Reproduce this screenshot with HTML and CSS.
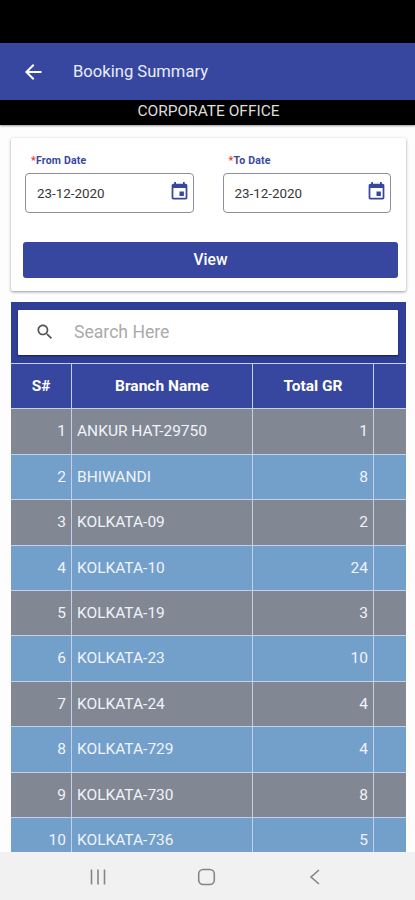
FILE: index.html
```
<!DOCTYPE html>
<html lang="en">
<head>
    <meta charset="UTF-8">
    <meta name="viewport" content="width=device-width, initial-scale=1.0">
    <title>Booking Summary</title>
    <link rel="stylesheet" href="styles.css">
</head>
<body>
    <div class="status-bar"></div>

    <header class="app-bar">
        <svg class="back-icon" viewBox="0 0 24 24"><path d="M20.500 10.900H7.83l5.59-5.49L12 4l-8 8 8 8 1.41-1.41L7.83 13.100H20.500v-2.200z"/></svg>
        <h1>Booking Summary</h1>
    </header>
    <div class="office">CORPORATE OFFICE</div>

    <main class="content">
        <!-- Date filter -->
        <form class="card">
            <div class="dates">
                <div class="form-group">
                    <label><span class="required">*</span>From Date</label>
                    <div class="date-input">
                        <span>23-12-2020</span>
                        <svg viewBox="0 0 24 24"><path d="M17 12h-5v5h5v-5zM16 1v2H8V1H6v2H5c-1.11 0-1.99.9-1.99 2L3 19c0 1.1.89 2 2 2h14c1.1 0 2-.9 2-2V5c0-1.1-.9-2-2-2h-1V1h-2zm3 18H5V8h14v11z"/></svg>
                    </div>
                </div>
                <div class="form-group">
                    <label><span class="required">*</span>To Date</label>
                    <div class="date-input">
                        <span>23-12-2020</span>
                        <svg viewBox="0 0 24 24"><path d="M17 12h-5v5h5v-5zM16 1v2H8V1H6v2H5c-1.11 0-1.99.9-1.99 2L3 19c0 1.1.89 2 2 2h14c1.1 0 2-.9 2-2V5c0-1.1-.9-2-2-2h-1V1h-2zm3 18H5V8h14v11z"/></svg>
                    </div>
                </div>
            </div>
            <button type="button" class="view-btn">View</button>
        </form>

        <!-- Results -->
        <section class="results">
            <div class="search-wrap">
                <div class="search">
                    <svg viewBox="0 0 24 24"><path d="M15.5 14h-.79l-.28-.27C15.41 12.59 16 11.11 16 9.5 16 5.91 13.09 3 9.5 3S3 5.91 3 9.5 5.91 16 9.5 16c1.61 0 3.09-.59 4.23-1.57l.27.28v.79l5 4.99L20.49 19l-4.99-5zm-6 0C7.01 14 5 11.99 5 9.5S7.01 5 9.5 5 14 7.01 14 9.5 11.99 14 9.5 14z"/></svg>
                    <span>Search Here</span>
                </div>
            </div>
            <div class="row head"><span>S#</span><span>Branch Name</span><span>Total GR</span><span></span></div>
            <div class="row"><span>1</span><span>ANKUR HAT-29750</span><span>1</span><span></span></div>
            <div class="row"><span>2</span><span>BHIWANDI</span><span>8</span><span></span></div>
            <div class="row"><span>3</span><span>KOLKATA-09</span><span>2</span><span></span></div>
            <div class="row"><span>4</span><span>KOLKATA-10</span><span>24</span><span></span></div>
            <div class="row"><span>5</span><span>KOLKATA-19</span><span>3</span><span></span></div>
            <div class="row"><span>6</span><span>KOLKATA-23</span><span>10</span><span></span></div>
            <div class="row"><span>7</span><span>KOLKATA-24</span><span>4</span><span></span></div>
            <div class="row"><span>8</span><span>KOLKATA-729</span><span>4</span><span></span></div>
            <div class="row"><span>9</span><span>KOLKATA-730</span><span>8</span><span></span></div>
            <div class="row"><span>10</span><span>KOLKATA-736</span><span>5</span><span></span></div>
        </section>
    </main>

    <nav class="nav-bar">
        <svg viewBox="0 0 20 20"><path d="M3.500 2.500v15M10 2.500v15M16.500 2.500v15"/></svg>
        <svg viewBox="0 0 20 20"><rect x="1.700" y="2.500" width="15.600" height="15" rx="4.500"/></svg>
        <svg viewBox="0 0 20 20"><path d="M14 3L6 10l8 7"/></svg>
    </nav>
</body>
</html>
```

FILE: styles.css
```
* {
    box-sizing: border-box;
}

body {
    font-family: Roboto, sans-serif;
    margin: 0;
    height: 900px;
    display: flex;
    flex-direction: column;
    overflow: hidden;
    background: #fdfdfd;
}

.status-bar {
    height: 43px;
    background: #000;
}

.app-bar {
    height: 57px;
    display: flex;
    align-items: center;
    padding-left: 21px;
    background: #37479f;
    color: #e8ecfb;
}

.back-icon {
    width: 24px;
    height: 24px;
    fill: #fff;
}

.app-bar h1 {
    margin: 0 0 0 28px;
    font-size: 16.6px;
    font-weight: 400;
}

.office {
    height: 25px;
    line-height: 23px;
    background: #000;
    color: #ddd;
    font-size: 15.5px;
    text-align: center;
    padding-left: 2px;
    box-shadow: 0 1px 2px rgba(0, 0, 0, 0.4);
}

.content {
    flex: 1;
    min-height: 0;
    display: flex;
    flex-direction: column;
    padding: 13px 9px 0 11px;
}

.card {
    height: 153px;
    padding: 16px 8px 0 12px;
    background: #fff;
    border-radius: 2px;
    box-shadow: 0 1px 3px rgba(0, 0, 0, 0.4);
}

.dates {
    display: flex;
    gap: 29px;
    padding: 0 7px 0 2px;
}

.form-group {
    flex: 1;
}

.form-group label {
    display: block;
    height: 19px;
    padding-left: 6px;
    font-size: 10.5px;
    letter-spacing: 0.2px;
    line-height: 13px;
    font-weight: 700;
    color: #37479f;
}

.required {
    color: #e53935;
}

.date-input {
    height: 40px;
    display: flex;
    justify-content: space-between;
    padding: 0 3px 0 11px;
    border: 1px solid #8d8f9b;
    border-radius: 4px;
    font-size: 13.4px;
    line-height: 40px;
    color: #383838;
}

.date-input svg {
    width: 21px;
    height: 21px;
    margin-top: 7px;
    fill: #37479f;
}

.view-btn {
    display: block;
    width: 100%;
    height: 36px;
    margin-top: 29px;
    padding: 0 0 1px;
    border: none;
    border-radius: 3px;
    background: #37479f;
    color: #fff;
    font: 500 15.6px Roboto, sans-serif;
}

.results {
    flex: 1;
    min-height: 0;
    margin-top: 11px;
    overflow: hidden;
}

.search-wrap {
    height: 61px;
    padding: 8px 8px 0 7px;
    background: #303e98;
}

.search {
    height: 45px;
    display: flex;
    align-items: center;
    padding: 0 0 1px 17px;
    background: #fff;
    border-radius: 1px;
    box-shadow: 0 1px 2px rgba(0, 0, 0, 0.5);
    font-size: 17.6px;
    color: #aaa;
}

.search svg {
    width: 20px;
    height: 20px;
    margin: -1px 19px 0 0;
    fill: #555;
}

.row {
    height: 45.4px;
    display: grid;
    grid-template-columns: 61px 181px 121px 1fr;
    background: #72a0cb;
    color: #f0f3fa;
    font-size: 15.5px;
    line-height: 45px;
    border-top: 1px solid #c5d0e8;
}

.row:nth-child(odd) {
    background: #828893;
}

.row span {
    padding: 0 5px;
    text-align: right;
    border-right: 1px solid #c5d0e8;
}

.row span:nth-child(2) {
    text-align: left;
}

.row span:last-child {
    border-right: none;
}

.row.head {
    background: #37479f;
    color: #fff;
    font-weight: 700;
}

.row.head span {
    text-align: center;
}

.nav-bar {
    height: 48px;
    display: flex;
    justify-content: space-between;
    align-items: center;
    padding: 1px 90px 0 88px;
    background: #f1f1f1;
}

.nav-bar svg {
    width: 20px;
    height: 20px;
    fill: none;
    stroke: #858585;
    stroke-width: 1.6;
}
```
